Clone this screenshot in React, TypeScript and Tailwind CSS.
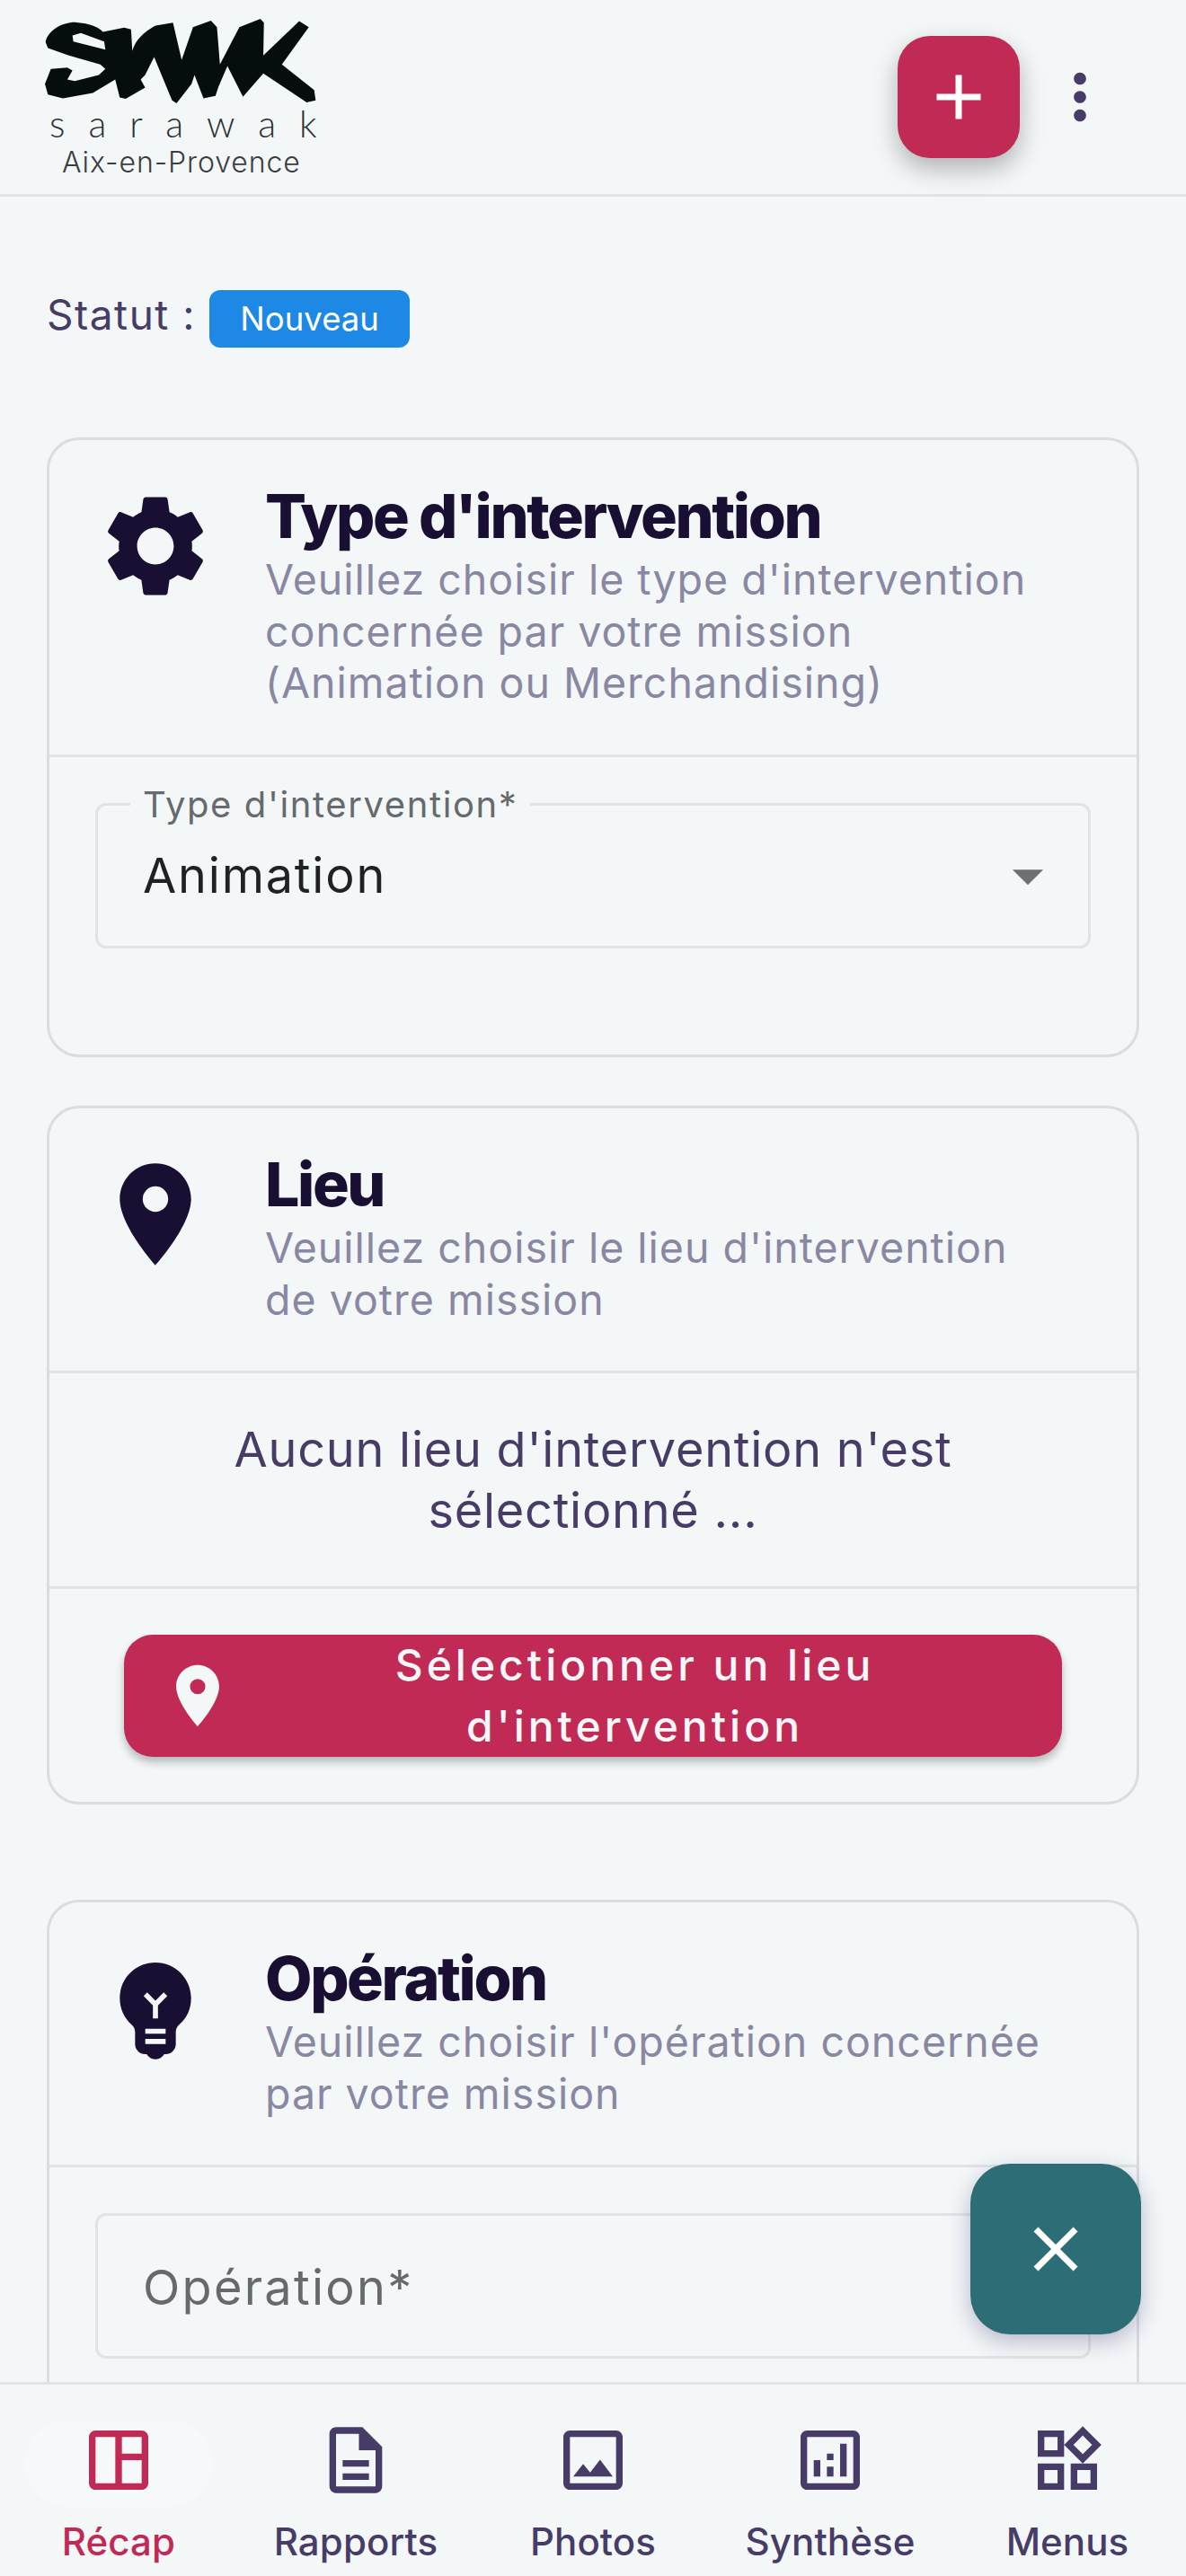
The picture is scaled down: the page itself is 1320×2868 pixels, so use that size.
import React from "react"
import {
  MdAdd,
  MdArrowDropDown,
  MdClose,
  MdEmojiObjects,
  MdMoreVert,
  MdOutlineAnalytics,
  MdOutlineImage,
  MdOutlineSpaceDashboard,
  MdOutlineWidgets,
  MdPlace,
  MdSettings,
} from "react-icons/md"

const Logo = () => (
  <div className="flex flex-col w-[303px]">
    <svg viewBox="30 30 910 290" className="w-[303px] h-[97px]">
      <path
        fill="#060d0e"
        fillRule="evenodd"
        d="M32 110C40 70 90 42 135 44C170 46 210 58 224 76L295 62L318 68L322 140C330 115 345 85 400 55L458 45L487 170L525 60L585 38L605 60L615 185L680 60L750 32L762 45L760 155L880 40L912 60L822 185L930 270L935 305L905 312L760 215L692 293L640 190L610 260L600 290L560 298L530 220L520 250L470 315L455 305L395 160L365 220L350 235L365 262L300 300L280 295L265 235L190 280L90 298L40 285L30 250L50 200L105 195L122 205L105 235L130 240L210 220L232 200L215 185L110 155L40 130ZM122 88L150 80L228 108L232 135L125 108Z"
      />
    </svg>
    <span className="mt-[2px] pl-[5px] text-[41px] leading-[38px] tracking-[26px] font-light text-[#2b2f31] font-['Lato',sans-serif] whitespace-nowrap">
      sarawak
    </span>
    <span className="mt-[6px] pl-[19px] text-[32px] leading-[36px] font-light tracking-[0.9px] text-[#3a3e40] whitespace-nowrap">
      Aix-en-Provence
    </span>
  </div>
)

const CardHead = ({ icon, title, lines }: { icon: React.ReactNode; title: string; lines: string[] }) => (
  <div className="flex gap-[54px] pl-[50px] pt-[48px] pb-[50px] border-b-[3px] border-[#e1e4e5]">
    <div className="mt-[2px] w-[136px] h-[136px] shrink-0 text-[#190f33]">{icon}</div>
    <div>
      <h2 className="text-[68px] leading-[72px] font-extrabold tracking-[-2.4px] text-[#190f33]">{title}</h2>
      <p className="mt-[7px] text-[46.5px] leading-[57.5px] text-[#8a87a3] tracking-[1px]">
        {lines.map(l => (
          <span key={l} className="block whitespace-nowrap">
            {l}
          </span>
        ))}
      </p>
    </div>
  </div>
)

const NavItem = ({ icon, label, active }: { icon: React.ReactNode; label: string; active?: boolean }) => (
  <div className={`relative flex flex-col items-center ${active ? "text-[#c02a55]" : "text-[#473c67]"}`}>
    {active && <div className="absolute top-[40px] left-[27px] w-[210px] h-[96px] rounded-[48px] bg-[#f6f9fa]" />}
    <div className="relative mt-[40px] w-[88px] h-[88px]">{icon}</div>
    <span className="relative mt-[22px] text-[42px] leading-[50px] font-medium tracking-[0.1px]">{label}</span>
  </div>
)

const ReportIcon = () => (
  <svg viewBox="0 0 24 24" width={88} height={88} fill="currentColor">
    <path d="M8 16h8v2H8zm0-4h8v2H8zm6-10H6c-1.1 0-2 .9-2 2v16c0 1.1.89 2 1.99 2H18c1.1 0 2-.9 2-2V8l-6-6zm4 18H6V4h7v5h5v11z" />
    <path d="M13 3h1l5 5v1h-6z" />
  </svg>
)

export default function App() {
  return (
    <div className="relative h-[2868px] w-[1320px] flex flex-col overflow-hidden bg-[#f3f7f8] font-['Inter',sans-serif]">
      <header className="relative h-[219px] shrink-0 flex items-start justify-between pl-[50px] pt-[20px] border-b-[3px] border-[#e1e4e5]">
        <Logo />
        <div className="flex items-center pr-[118px] mt-[20px]">
          <button className="w-[136px] h-[136px] flex items-center justify-center rounded-[36px] bg-[#c02a55] text-white shadow-[0_12px_28px_rgba(0,0,0,0.28)]">
            <MdAdd size={84} />
          </button>
          <MdMoreVert size={82} className="ml-[26px] -mr-[41px] text-[#473c67]" />
        </div>
      </header>

      <main className="flex-1 overflow-hidden px-[52px] pt-[104px]">
        <div className="flex items-center h-[64px]">
          <span className="text-[46px] tracking-[1.5px] text-[#473c67] -mt-[10px]">Statut :</span>
          <span className="ml-[15px] w-[223px] h-[64px] flex items-center justify-center rounded-[12px] bg-[#1e88e5] text-[36.5px] text-white">
            Nouveau
          </span>
        </div>

        <section className="mt-[100px] h-[690px] rounded-[36px] border-[3px] border-[#d9dddf]">
          <CardHead
            icon={<MdSettings size={136} />}
            title="Type d'intervention"
            lines={[
              "Veuillez choisir le type d'intervention",
              "concernée par votre mission",
              "(Animation ou Merchandising)",
            ]}
          />
          <div className="px-[51px] pt-[51px]">
            <div className="relative h-[162px] flex items-center justify-between pl-[50px] pr-[26px] rounded-[12px] border-[3px] border-[#e1e4e5]">
              <span className="absolute -top-[25px] left-[36px] px-[14px] bg-[#f3f7f8] text-[40px] leading-[48px] tracking-[1.6px] text-[#666a6c]">
                Type d'intervention*
              </span>
              <span className="text-[54px] tracking-[1.8px] text-[#1f2224]">Animation</span>
              <MdArrowDropDown size={82} className="text-[#6e7172]" />
            </div>
          </div>
        </section>

        <section className="mt-[54px] h-[778px] rounded-[36px] border-[3px] border-[#d9dddf]">
          <CardHead
            icon={<MdPlace size={136} />}
            title="Lieu"
            lines={["Veuillez choisir le lieu d'intervention", "de votre mission"]}
          />
          <div className="h-[240px] flex items-center justify-center border-b-[3px] border-[#e1e4e5] px-[60px] text-center text-[54px] leading-[68px] tracking-[0.75px] text-[#473c67]">
            <p>
              Aucun lieu d'intervention n'est
              <br />
              sélectionné ...
            </p>
          </div>
          <div className="px-[83px] pt-[51px]">
            <button className="w-full h-[136px] flex items-center pl-[41px] pr-[30px] rounded-[32px] bg-[#c02a55] text-[#f3f7f8] shadow-[0_6px_10px_rgba(0,0,0,0.25)]">
              <MdPlace size={82} className="shrink-0" />
              <span className="flex-1 text-center text-[48px] leading-[68px] font-medium tracking-[4px]">
                Sélectionner un lieu
                <br />
                d'intervention
              </span>
            </button>
          </div>
        </section>

        <section className="mt-[106px] h-[800px] rounded-[36px] border-[3px] border-[#d9dddf]">
          <CardHead
            icon={<MdEmojiObjects size={136} />}
            title="Opération"
            lines={["Veuillez choisir l'opération concernée", "par votre mission"]}
          />
          <div className="px-[51px] pt-[51px]">
            <div className="h-[162px] flex items-center pl-[50px] pt-[3px] rounded-[12px] border-[3px] border-[#e1e4e5]">
              <span className="text-[54px] tracking-[2.3px] text-[#666a6c]">Opération*</span>
            </div>
          </div>
        </section>
      </main>

      <nav className="h-[216px] shrink-0 grid grid-cols-5 border-t-[3px] border-[#e1e4e5] bg-[#f3f7f8]">
        <NavItem active icon={<MdOutlineSpaceDashboard size={88} />} label="Récap" />
        <NavItem icon={<ReportIcon />} label="Rapports" />
        <NavItem icon={<MdOutlineImage size={88} />} label="Photos" />
        <NavItem icon={<MdOutlineAnalytics size={88} />} label="Synthèse" />
        <NavItem icon={<MdOutlineWidgets size={88} />} label="Menus" />
      </nav>

      <button className="absolute left-[1080px] top-[2409px] w-[190px] h-[190px] flex items-center justify-center rounded-[44px] bg-[#2d6e76] text-white shadow-[0_8px_24px_rgba(50,40,100,0.3)]">
        <MdClose size={84} />
      </button>
    </div>
  )
}
